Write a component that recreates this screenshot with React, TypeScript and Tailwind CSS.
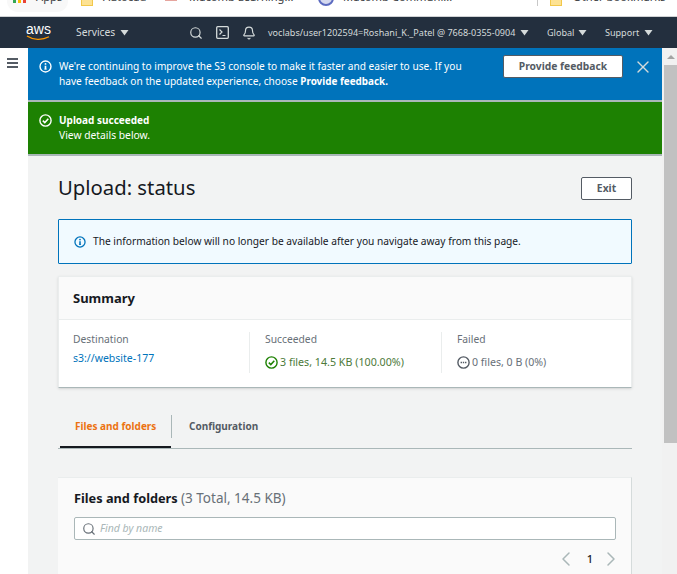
import { Search, X, Bell, ChevronLeft, ChevronRight } from "lucide-react";

const FONT = "font-['Noto_Sans','Open_Sans',sans-serif]";

function Caret({ className = "" }: { className?: string }) {
  return (
    <svg width="9" height="6" viewBox="0 0 9 6" className={`shrink-0 ${className}`}>
      <path d="M0 0h8L4 5.6z" fill="currentColor" transform="translate(.5 0)" />
    </svg>
  );
}

function InfoIcon({ color, size = 14 }: { color: string; size?: number }) {
  return (
    <svg width={size} height={size} viewBox="0 0 14 14" fill="none" className="shrink-0">
      <circle cx="7" cy="7" r="5.9" stroke={color} strokeWidth="1.5" />
      <path d="M7 6.2v3.6" stroke={color} strokeWidth="1.8" />
      <path d="M5.8 9.9h2.4" stroke={color} strokeWidth="1" />
      <circle cx="7" cy="4.2" r="1" fill={color} />
    </svg>
  );
}

function CheckIcon({ color, size = 13 }: { color: string; size?: number }) {
  return (
    <svg width={size} height={size} viewBox="0 0 13 13" fill="none" className="shrink-0">
      <circle cx="6.5" cy="6.5" r="5.6" stroke={color} strokeWidth="1.4" />
      <path d="M3.8 6.6l2 2 3.5-3.9" stroke={color} strokeWidth="1.5" />
    </svg>
  );
}

function MinusIcon() {
  return (
    <svg width="13" height="13" viewBox="0 0 13 13" fill="none" className="shrink-0">
      <circle cx="6.5" cy="6.5" r="5.6" stroke="#545b64" strokeWidth="1.4" />
      <path d="M3.6 6.5h5.8" stroke="#545b64" strokeWidth="1.6" strokeDasharray="1.4 .8" />
    </svg>
  );
}

function BookmarkBar() {
  return (
    <div className="h-[16px] bg-white border-b border-[#d0d2d4] box-content overflow-hidden relative">
      <div className="absolute left-[7px] top-[-10px] w-[61px] h-[22px] rounded-full bg-[#f8f8f8]" />
      <div className="relative flex items-start text-[11.2px] leading-[14px] text-[#3c4043] whitespace-nowrap">
        <span className="ml-[13px] w-[13px] mt-0 flex gap-[2px]">
          <i className="w-[3px] h-[3px] bg-[#34a853]" />
          <i className="w-[3px] h-[3px] bg-[#fbbc04]" />
          <i className="w-[3px] h-[3px] bg-[#ea4335]" />
        </span>
        <span className="ml-[10px] w-[26px] mt-[-10px]">Apps</span>
        <span className="ml-[19px] w-[12px] h-[12px] mt-[-6px] bg-[#fde293] border border-[#f2c84b]" />
        <span className="ml-[10px] w-[44px] mt-[-10px]">Autocad</span>
        <span className="ml-[18px] w-[12px] h-[4px] mt-[-3px] bg-[#e6a59e]" />
        <span className="ml-[12px] w-[103px] mt-[-10px]">Macomb Learning...</span>
        <span className="ml-[26px] w-[16px] h-[16px] mt-[-10px] rounded-full border-2 border-[#5c6bc0] bg-[#d5d9ef]" />
        <span className="ml-[9px] w-[111px] mt-[-10px]">Macomb Communi...</span>
        <span className="ml-[83px] w-px h-[6px] bg-[#c8c8c8]" />
        <span className="ml-[12px] w-[12px] h-[12px] mt-[-6px] bg-[#fde293] border border-[#f2c84b]" />
        <span className="ml-[11px] mt-[-10px]">Other bookmarks</span>
      </div>
    </div>
  );
}

function TopNav() {
  return (
    <div className="h-[31px] bg-[#232f3e] flex items-center text-[#d5dbdb] whitespace-nowrap">
      <div className="ml-[26px] w-[25px] flex flex-col items-center">
        <span className="text-white text-[14px] leading-[11px] font-['Liberation_Sans',sans-serif]">aws</span>
        <svg width="25" height="6" viewBox="0 0 25 6" fill="none">
          <path d="M1 1c6 4 15 4.5 22 .8" stroke="#f90" strokeWidth="1.3" />
        </svg>
      </div>
      <span className="ml-[25px] w-[39px] text-[10.3px]">Services</span>
      <Caret className="ml-[5px]" />
      <Search size={14} strokeWidth={2} className="ml-[60px]" />
      <svg width="13" height="13" viewBox="0 0 13 13" fill="none" className="ml-[13px]">
        <rect x=".7" y=".7" width="11.6" height="11.6" rx="1" stroke="currentColor" strokeWidth="1.3" />
        <path d="M3.5 3.5l2.5 2.5-2.5 2.5M6.5 9.5h3" stroke="currentColor" strokeWidth="1.2" />
      </svg>
      <Bell size={14} strokeWidth={2} className="ml-[13px]" />
      <span className="ml-[12px] w-[248px] text-[9.05px]">voclabs/user1202594=Roshani_K._Patel @ 7668-0355-0904</span>
      <Caret className="ml-[4px]" />
      <span className="ml-[18px] w-[27px] text-[9.05px]">Global</span>
      <Caret className="ml-[4px]" />
      <span className="ml-[18px] w-[35px] text-[9.05px]">Support</span>
      <Caret className="ml-[4px]" />
    </div>
  );
}

function Sidebar() {
  return (
    <div className="w-[28px] shrink-0 bg-white pt-[10px] pl-[7px]">
      <div className="w-[11px] flex flex-col gap-[2px]">
        <i className="block h-[2px] bg-[#545b64]" />
        <i className="block h-[2px] bg-[#545b64]" />
        <i className="block h-[2px] bg-[#545b64]" />
      </div>
    </div>
  );
}

function Banners() {
  return (
    <>
      <div className="h-[52px] bg-[#0073bb] border-b-2 border-[#aab7b8] box-content flex text-white text-[10.15px] leading-[15px] pl-[11px]">
        <div className="pt-[12px]"><InfoIcon color="#fff" size={13} /></div>
        <p className="ml-[7px] pt-[11px] w-[411px]">
          We're continuing to improve the S3 console to make it faster and easier to use. If you have feedback on the updated experience, choose <b className="text-[9.9px]">Provide feedback.</b>
        </p>
        <button className="ml-[33px] mt-[7px] w-[120px] h-[23px] bg-white border border-[#545b64] rounded-[2px] text-[#545b64] font-bold text-[10.3px]">
          Provide feedback
        </button>
        <X size={20} strokeWidth={1.6} className="ml-[10px] mt-[9px] text-[#d5dbdb]" />
      </div>
      <div className="h-[52px] bg-[#1d8102] border-b-2 border-[#aab7b8] box-content flex text-white leading-[15px] pl-[11px]">
        <div className="pt-[12px]"><CheckIcon color="#fff" size={13} /></div>
        <div className="ml-[7px] pt-[11px]">
          <div className="font-bold text-[10px]">Upload succeeded</div>
          <div className="text-[10.3px]">View details below.</div>
        </div>
      </div>
    </>
  );
}

function Summary() {
  return (
    <section className="mt-[12px] bg-white border border-[#eaeded] border-b-[#aab7b8] shadow-sm">
      <div className="h-[43px] bg-[#fafafa] border-b border-[#eaeded] flex items-center px-[14px] pt-[2px]">
        <h2 className="text-[13px] font-bold text-[#16191f]">Summary</h2>
      </div>
      <div className="h-[67px] flex pt-[12px] text-[10.3px] leading-[15px] text-[#687078]">
        <div className="w-[190px] pl-[14px]">
          <div>Destination</div>
          <div className="mt-[4px] text-[10.5px] text-[#0073bb]">s3://website-177</div>
        </div>
        <div className="w-[192px] h-[41px] border-l border-[#eaeded] pl-[15px]">
          <div>Succeeded</div>
          <div className="mt-[8px] flex items-center gap-[2px]">
            <CheckIcon color="#1d8102" />
            <span className="text-[10.7px] text-[#4d7a3a]">3 files, 14.5 KB (100.00%)</span>
          </div>
        </div>
        <div className="h-[41px] border-l border-[#eaeded] pl-[15px]">
          <div>Failed</div>
          <div className="mt-[8px] flex items-center gap-[2px]">
            <MinusIcon />
            <span className="text-[10.6px]">0 files, 0 B (0%)</span>
          </div>
        </div>
      </div>
    </section>
  );
}

function Tabs() {
  return (
    <div className="mt-[13px] h-[48px] border-b border-[#aab7b8] flex items-start text-[10px] font-bold">
      <div className="ml-[2px] mt-[14px] w-[111px] h-[33px] border-b-2 border-[#16191f] pl-[15px] pt-[4px] text-[#ec7211]">
        Files and folders
      </div>
      <div className="mt-[14px] h-[23px] border-l border-[#aab7b8] pl-[17px] pt-[4px] text-[#545b64]">
        Configuration
      </div>
    </div>
  );
}

function FilesPanel() {
  return (
    <section className="mt-[28px] w-[574px] h-[120px] bg-[#fafafa] border-t border-r border-[#eaeded] border-r-[#d5dbdb] px-[16px] pt-[10px]">
      <h2 className="text-[12.75px] leading-[20px] font-bold text-[#16191f]">
        Files and folders <span className="text-[13.5px] font-normal text-[#687078]">(3 Total, 14.5 KB)</span>
      </h2>
      <div className="mt-[9px] w-[542px] h-[23px] bg-white border border-[#aab7b8] rounded-[2px] flex items-center pl-[7px]">
        <Search size={14} strokeWidth={2} className="text-[#687078]" />
        <span className="ml-[4px] text-[10.5px] italic text-[#aab7b8]">Find by name</span>
      </div>
      <div className="mt-[7px] flex items-center justify-end w-[542px] text-[11px] text-[#16191f] font-medium">
        <ChevronLeft size={24} strokeWidth={1.5} className="text-[#aab7b8]" />
        <span className="ml-[9px] mr-[6px]">1</span>
        <ChevronRight size={24} strokeWidth={1.5} className="text-[#aab7b8] -mr-[7px]" />
      </div>
    </section>
  );
}

function Scrollbar() {
  return (
    <div className="w-[15px] shrink-0 bg-[#f1f1f1] flex flex-col items-end">
      <div className="h-[17px] w-[13px] flex items-center justify-center">
        <i className="block w-0 h-0 border-x-[4px] border-x-transparent border-b-[4px] border-b-[#a3a3a3]" />
      </div>
      <div className="w-[13px] h-[378px] bg-[#c1c1c1]" />
    </div>
  );
}

export default function App() {
  return (
    <div className={`w-[677px] h-[574px] overflow-hidden flex flex-col bg-white ${FONT}`}>
      <BookmarkBar />
      <TopNav />
      <div className="flex flex-1 min-h-0">
        <Sidebar />
        <main className="w-[634px] bg-[#f2f3f3]">
          <Banners />
          <div className="pl-[30px] pr-[30px]">
            <div className="h-[63px] flex items-center justify-between">
              <h1 className="text-[20.3px] text-[#16191f]">Upload: status</h1>
              <button className="mt-[2px] w-[51px] h-[23px] bg-white border border-[#545b64] rounded-[2px] text-[10.3px] font-bold text-[#545b64]">
                Exit
              </button>
            </div>
            <div className="h-[45px] bg-[#f1faff] border border-[#0073bb] rounded-[1px] flex items-center pl-[15px] text-[10.2px] text-[#16191f]">
              <InfoIcon color="#0073bb" size={12} />
              <span className="ml-[7px]">The information below will no longer be available after you navigate away from this page.</span>
            </div>
            <Summary />
            <Tabs />
            <FilesPanel />
          </div>
        </main>
        <Scrollbar />
      </div>
    </div>
  );
}
